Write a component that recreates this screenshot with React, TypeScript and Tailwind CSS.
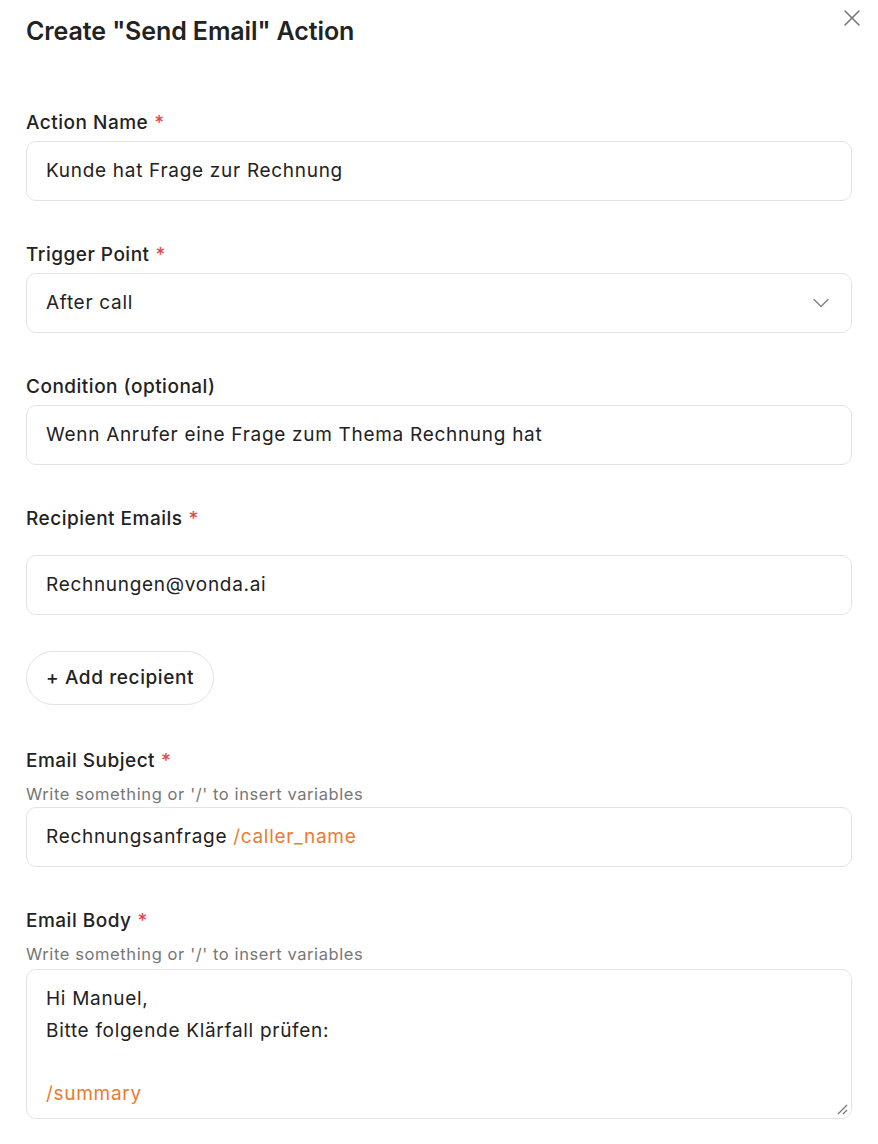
import React from 'react';
import { X, ChevronDown } from 'lucide-react';

const font = { fontFamily: 'Inter, "Noto Sans", sans-serif' };

const Label = ({ children, required }: { children: React.ReactNode; required?: boolean }) => (
  <div className="text-[19px] leading-[26px] font-medium text-[#222] tracking-[0.5px]">
    {children}
    {required && <span className="text-[#e5484d] ml-1.5">*</span>}
  </div>
);

const Helper = () => (
  <div className="text-[16.5px] leading-[22px] text-[#777] tracking-[0.6px] mt-[9px]">
    Write something or '/' to insert variables
  </div>
);

const Field = ({ children }: { children: React.ReactNode }) => (
  <div className="h-[60px] rounded-[10px] border border-[#e3e3e6] px-[19px] flex items-center text-[19px] tracking-[0.7px] text-[#222] bg-white">
    {children}
  </div>
);

export default function App() {
  return (
    <div className="min-h-[1144px] bg-white px-[26px] pt-[13px] relative" style={font}>
      <button className="absolute top-[4px] right-[12px] text-[#777]">
        <X className="w-[28px] h-[28px]" strokeWidth={1.3} />
      </button>
      <h1 className="text-[25px] leading-[36px] font-semibold text-[#222] tracking-[-0.1px]">Create "Send Email" Action</h1>

      <div className="mt-[61px] flex flex-col">
        <Label required>Action Name</Label>
        <div className="mt-[5px]">
          <Field>Kunde hat Frage zur Rechnung</Field>
        </div>

        <div className="mt-[41px]">
          <Label required>Trigger Point</Label>
        </div>
        <div className="mt-[5px]">
          <Field>
            <span className="flex-1">After call</span>
            <ChevronDown className="w-[28px] h-[28px] text-[#888] -mr-[3px]" strokeWidth={1.3} />
          </Field>
        </div>

        <div className="mt-[41px]">
          <Label>Condition (optional)</Label>
        </div>
        <div className="mt-[5px]">
          <Field>Wenn Anrufer eine Frage zum Thema Rechnung hat</Field>
        </div>

        <div className="mt-[41px]">
          <Label required>Recipient Emails</Label>
        </div>
        <div className="mt-[23px]">
          <Field>Rechnungen@vonda.ai</Field>
        </div>

        <div className="mt-[36px]">
          <button className="h-[54px] px-[19px] rounded-full border border-[#e3e3e6] text-[19px] tracking-[0.6px] font-medium text-[#222] bg-white">
            + Add recipient
          </button>
        </div>

        <div className="mt-[43px]">
          <Label required>Email Subject</Label>
          <Helper />
        </div>
        <div className="mt-[2px]">
          <Field>
            <span>Rechnungsanfrage</span>
            <span className="text-[#ee7a30] ml-[6px]">/caller_name</span>
          </Field>
        </div>

        <div className="mt-[41px]">
          <Label required>Email Body</Label>
          <Helper />
        </div>
        <div className="mt-[4px] relative h-[150px] rounded-[10px] border border-[#e3e3e6] px-[19px] pt-[13px] text-[19px] tracking-[0.7px] leading-[31.5px] text-[#222]">
          <div>Hi Manuel,</div>
          <div>Bitte folgende Klärfall prüfen:</div>
          <div>&nbsp;</div>
          <div className="text-[#ee7a30]">/summary</div>
          <svg className="absolute right-[3px] bottom-[3px]" width="12" height="12" viewBox="0 0 12 12">
            <line x1="2" y1="11" x2="11" y2="2" stroke="#777" strokeWidth="1.3" />
            <line x1="7" y1="11" x2="11" y2="7" stroke="#777" strokeWidth="1.3" />
          </svg>
        </div>
      </div>
    </div>
  );
}
